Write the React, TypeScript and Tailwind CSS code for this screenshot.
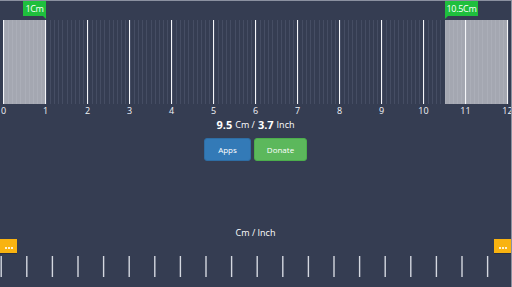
import React from "react";

const CM = 42;
const X0 = 3.5;

const cmX = (cm: number) => X0 + cm * CM;

const TopRuler = () => {
  const minor = Array.from({ length: 121 }, (_, i) => i);
  const major = Array.from({ length: 13 }, (_, i) => i);
  return (
    <svg width="512" height="116" className="block">
      {minor.map((i) => (
        <line
          key={i}
          x1={Math.round(cmX(i / 10)) + 0.5}
          x2={Math.round(cmX(i / 10)) + 0.5}
          y1={19}
          y2={103}
          stroke="#454d63"
          strokeWidth={1}
        />
      ))}
      <rect x={3} y={19} width={43} height={84} fill="#ffffff" fillOpacity={0.55} />
      <rect x={445} y={19} width={63} height={84} fill="#ffffff" fillOpacity={0.55} />
      {major.map((i) => (
        <line
          key={i}
          x1={cmX(i)}
          x2={cmX(i)}
          y1={19}
          y2={103}
          stroke="#f4f5f8"
          strokeWidth={1}
        />
      ))}
      {major.map((i) => (
        <text
          key={i}
          x={cmX(i)}
          y={113}
          textAnchor="middle"
          fill="#f2f3f6"
          fontSize="9"
          fontFamily="'Open Sans', sans-serif"
        >
          {i}
        </text>
      ))}
    </svg>
  );
};

const BottomRuler = () => {
  const ticks = Array.from({ length: 20 }, (_, i) => i);
  return (
    <svg width="511" height="24" className="block">
      {ticks.map((i) => (
        <line
          key={i}
          x1={1.2 + i * 25.6}
          x2={1.2 + i * 25.6}
          y1={1}
          y2={22}
          stroke="#d4d8e0"
          strokeWidth={1.4}
        />
      ))}
    </svg>
  );
};

const Handle = () => (
  <div className="flex h-[14px] w-[17px] items-end justify-center gap-[1px] bg-[#f9b310] pb-[4px] shadow-[0_1px_0_#2a3042]">
    <span className="h-[2px] w-[2px] bg-white/80" />
    <span className="h-[2px] w-[2px] bg-white/80" />
    <span className="h-[2px] w-[2px] bg-white/80" />
  </div>
);

export default function App() {
  return (
    <div className="relative flex h-[287px] w-[512px] flex-col overflow-hidden border-t border-r border-[#8b91a0] bg-[#353d52] font-['Open_Sans',sans-serif] text-white">
      <div className="relative h-[116px]">
        <TopRuler />
        <div className="absolute left-[23px] top-0 flex h-[15px] w-[23px] items-center justify-center bg-[#1fbf3d] text-[9px] leading-none tracking-[-0.3px]">
          1Cm
          <span className="absolute bottom-[-3px] right-0 h-0 w-0 border-l-[3px] border-t-[3px] border-l-transparent border-t-[#1fbf3d]" />
        </div>
        <div className="absolute left-[445px] top-0 flex h-[15px] w-[33px] items-center justify-center bg-[#1fbf3d] text-[9px] leading-none tracking-[-0.3px]">
          10.5Cm
          <span className="absolute bottom-[-3px] left-0 h-0 w-0 border-r-[3px] border-t-[3px] border-r-transparent border-t-[#1fbf3d]" />
        </div>
      </div>
      <div className="flex h-[15px] items-center justify-center gap-[3px] text-[9px] leading-none">
        <span className="text-[11px] font-bold">9.5</span>
        <span>Cm /</span>
        <span className="text-[11px] font-bold">3.7</span>
        <span>Inch</span>
      </div>
      <div className="mt-[6px] flex justify-center gap-[3px]">
        <button className="h-[23px] w-[47px] rounded-[3px] border border-[#2e6da4] bg-[#337ab7] text-[8px]">
          Apps
        </button>
        <button className="h-[23px] w-[53px] rounded-[3px] border border-[#4cae4c] bg-[#5cb85c] text-[8px]">
          Donate
        </button>
      </div>
      <div className="mt-[65px] flex h-[12px] items-center justify-center text-[9px] leading-none">
        Cm / Inch
      </div>
      <div className="mt-[1px] flex justify-between">
        <Handle />
        <Handle />
      </div>
      <div className="mt-[2px]">
        <BottomRuler />
      </div>
    </div>
  );
}
